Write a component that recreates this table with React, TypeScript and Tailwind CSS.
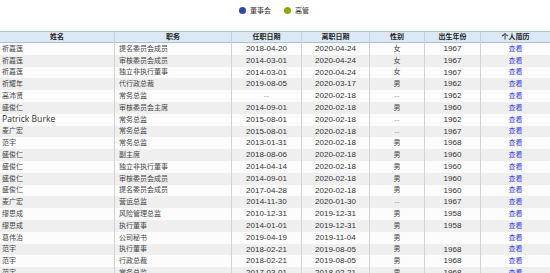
import React from "react";

const rows: string[][] = [
  ["祈嘉莲", "提名委员会成员", "2018-04-20", "2020-04-24", "女", "1967"],
  ["祈嘉莲", "审核委员会成员", "2014-03-01", "2020-04-24", "女", "1967"],
  ["祈嘉莲", "独立非执行董事", "2014-03-01", "2020-04-24", "女", "1967"],
  ["祈耀年", "代行政总裁", "2019-08-05", "2020-03-17", "男", "1962"],
  ["高沛贤", "常务总监", "--", "2020-02-18", "--", "1962"],
  ["盛俊仁", "审核委员会主席", "2014-09-01", "2020-02-18", "男", "1960"],
  ["Patrick Burke", "常务总监", "2015-08-01", "2020-02-18", "--", "1962"],
  ["麦广宏", "常务总监", "2015-08-01", "2020-02-18", "--", "1967"],
  ["范宇", "常务总监", "2013-01-31", "2020-02-18", "男", "1968"],
  ["盛俊仁", "副主席", "2018-08-06", "2020-02-18", "男", "1960"],
  ["盛俊仁", "独立非执行董事", "2014-04-14", "2020-02-18", "男", "1960"],
  ["盛俊仁", "审核委员会成员", "2014-09-01", "2020-02-18", "男", "1960"],
  ["盛俊仁", "提名委员会成员", "2017-04-28", "2020-02-18", "男", "1960"],
  ["麦广宏", "营运总监", "2014-11-30", "2020-01-30", "--", "1967"],
  ["缪思成", "风险管理总监", "2010-12-31", "2019-12-31", "男", "1958"],
  ["缪思成", "执行董事", "2014-01-01", "2019-12-31", "男", "1958"],
  ["葛伟治", "公司秘书", "2019-04-19", "2019-11-04", "男", ""],
  ["范宇", "执行董事", "2018-02-21", "2019-08-05", "男", "1968"],
  ["范宇", "行政总裁", "2018-02-21", "2019-08-05", "男", "1968"],
  ["范宇", "常务总监", "2017-03-01", "2018-02-21", "男", "1968"],
];

const headers = ["姓名", "职务", "任职日期", "离职日期", "性别", "出生年份", "个人简历"];

const grid = "grid grid-cols-[115px_117px_70px_68px_55px_56px_69px]";
const cjk = "font-['Liberation_Sans','Noto_Sans_CJK_SC',sans-serif]";

export default function App() {
  return (
    <div className={`w-[550px] h-[273px] overflow-hidden bg-white ${cjk}`}>
      <div className="h-[31px] flex items-start pt-[7px] pl-[239px] gap-[13px]">
        <div className="flex items-center gap-[4px]">
          <span className="w-[7px] h-[7px] rounded-full bg-[#2d4aa3]" />
          <span className="text-[7px] leading-[7px] text-[#333]">董事会</span>
        </div>
        <div className="flex items-center gap-[4px]">
          <span className="w-[7px] h-[7px] rounded-full bg-[#8cab12]" />
          <span className="text-[7px] leading-[7px] text-[#333]">高管</span>
        </div>
      </div>
      <div className={`${grid} h-[12px] bg-[#dde8f6] border-y border-[#a9c1e0]`}>
        {headers.map((h, i) => (
          <div
            key={h}
            className={`flex items-center justify-center text-[7px] font-bold text-[#222] ${
              i < headers.length - 1 ? "border-r border-[#bfd1ea]" : ""
            }`}
          >
            {h}
          </div>
        ))}
      </div>
      {rows.map((r, idx) => (
        <div
          key={idx}
          className={`${grid} h-[11.8px] ${idx % 2 === 0 ? "bg-[#fcfcfc]" : "bg-[#efefef]"}`}
        >
          <div className="flex items-center pl-[2px] border-r border-[#d2d2d2] overflow-hidden whitespace-nowrap">
            {/^[\x00-\x7F]+$/.test(r[0]) ? (
              <span className="text-[8.6px] text-[#333] font-['Open_Sans',sans-serif] font-medium">{r[0]}</span>
            ) : (
              <span className="text-[7px] text-[#444]">{r[0]}</span>
            )}
          </div>
          <div className="flex items-center pl-[4px] border-r border-[#d2d2d2] text-[7px] text-[#444] whitespace-nowrap">
            {r[1]}
          </div>
          <div
            className={`flex items-center justify-center border-r border-[#d2d2d2] text-[8px] ${
              r[2] === "--" ? "text-[#999]" : "text-[#333]"
            }`}
          >
            {r[2]}
          </div>
          <div className="flex items-center justify-center border-r border-[#d2d2d2] text-[8px] text-[#333]">
            {r[3]}
          </div>
          <div
            className={`flex items-center justify-center border-r border-[#d2d2d2] ${
              r[4] === "--" ? "text-[8px] text-[#999]" : "text-[7px] text-[#444]"
            }`}
          >
            {r[4]}
          </div>
          <div className="flex items-center justify-center border-r border-[#d2d2d2] text-[8px] text-[#333]">
            {r[5]}
          </div>
          <div className="flex items-center justify-center text-[7px] text-[#3b46dc]">
            <a className="cursor-pointer">查看</a>
          </div>
        </div>
      ))}
    </div>
  );
}
